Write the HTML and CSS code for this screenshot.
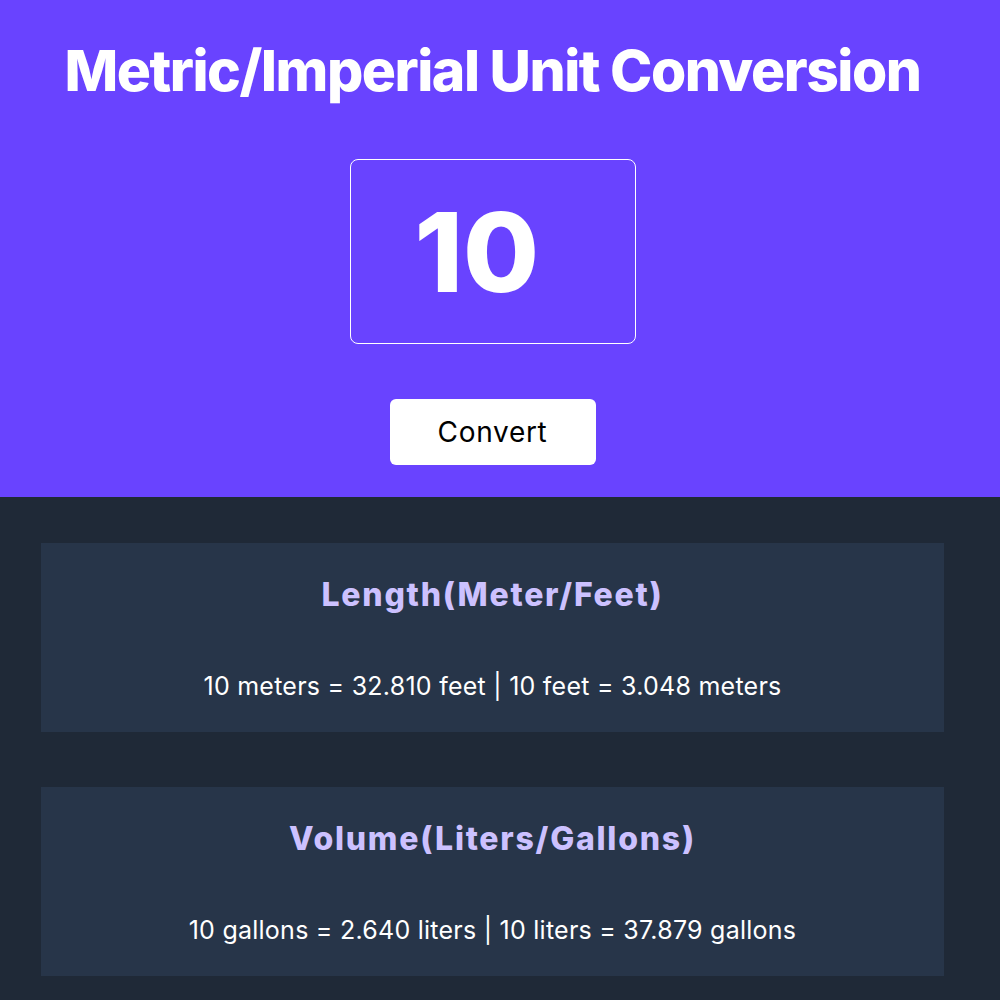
FILE: index.html
```html
<!DOCTYPE html>
<html lang="en">
<head>
<meta charset="utf-8">
<title>Unit Conversion</title>
<link rel="stylesheet" href="styles.css">
</head>
<body>
  <main class="app">
    <section class="hero">
      <div class="hero-inner">
        <h1 class="hero-title">Metric/Imperial Unit Conversion</h1>
        <div class="value-box"><span class="value">10</span></div>
        <button class="convert-btn" type="button">Convert</button>
      </div>
    </section>
    <section class="results">
      <div class="card">
        <h2 class="card-title">Length(Meter/Feet)</h2>
        <p class="card-text">10 meters = 32.810 feet | 10 feet = 3.048 meters</p>
      </div>
      <div class="card">
        <h2 class="card-title">Volume(Liters/Gallons)</h2>
        <p class="card-text">10 gallons = 2.640 liters | 10 liters = 37.879 gallons</p>
      </div>
    </section>
  </main>
</body>
</html>
```

FILE: styles.css
```css
* { box-sizing: border-box; }
html, body { margin: 0; padding: 0; }
body {
  font-family: Inter, "Noto Sans", sans-serif;
  background: #1f2937;
  color: #fff;
}
.app { display: flex; flex-direction: column; }
.hero {
  background: #6943ff;
  height: 497px;
}
.hero-inner {
  width: 985px;
  display: flex;
  flex-direction: column;
  align-items: center;
  padding-top: 38px;
}
.hero-title {
  margin: 0;
  font-size: 57px;
  font-weight: 800;
  letter-spacing: -1.5px;
  line-height: 66px;
  color: #fff;
}
.value-box {
  margin-top: 55px;
  width: 286px;
  height: 185px;
  border: 1px solid #fff;
  border-radius: 8px;
  display: flex;
  align-items: center;
  padding-left: 64px;
}
.value {
  font-size: 110px;
  font-weight: 800;
  line-height: 1;
  letter-spacing: 0;
}
.convert-btn {
  margin-top: 55px;
  width: 206px;
  height: 66px;
  background: #fff;
  color: #000;
  border: none;
  border-radius: 6px;
  font-family: Inter, sans-serif;
  font-size: 28px;
  font-weight: 400;
  letter-spacing: 0.7px;
}
.results {
  padding: 46px 56px 0 41px;
  display: flex;
  flex-direction: column;
  gap: 55px;
}
.card {
  background: #273549;
  height: 189px;
  display: flex;
  flex-direction: column;
  align-items: center;
  padding-top: 28px;
}
.card-title {
  margin: 0;
  font-size: 32px;
  font-weight: 800;
  line-height: 48px;
  letter-spacing: 1.75px;
  color: #ccc1ff;
}
.card-text {
  margin: 52px 0 0;
  font-size: 25px;
  line-height: 30px;
  letter-spacing: 0.25px;
  color: #fff;
}
```
